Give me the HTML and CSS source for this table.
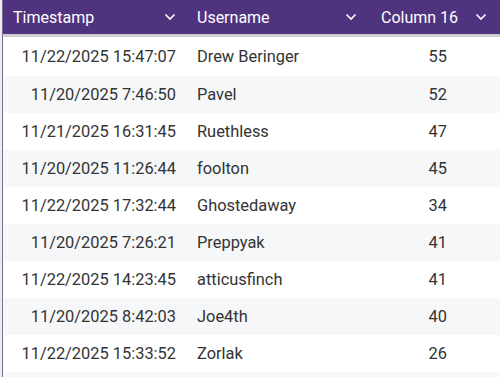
FILE: index.html
```html
<!DOCTYPE html>
<html>
<head>
<meta charset="utf-8">
<link rel="stylesheet" href="styles.css">
</head>
<body>
<div class="table">
  <div class="head">
    <div class="hcell"><span>Timestamp</span><svg class="chev" viewBox="0 0 12 8"><path d="M1.5 1.5 L6 6 L10.5 1.5" /></svg></div>
    <div class="hcell"><span>Username</span><svg class="chev" viewBox="0 0 12 8"><path d="M1.5 1.5 L6 6 L10.5 1.5" /></svg></div>
    <div class="hcell"><span>Column 16</span><svg class="chev" viewBox="0 0 12 8"><path d="M1.5 1.5 L6 6 L10.5 1.5" /></svg></div>
  </div>
  <div class="band"></div>
  <div class="body">
    <div class="row first"><div class="c ts">11/22/2025 15:47:07</div><div class="c un">Drew Beringer</div><div class="c num">55</div></div>
    <div class="row"><div class="c ts">11/20/2025 7:46:50</div><div class="c un">Pavel</div><div class="c num">52</div></div>
    <div class="row"><div class="c ts">11/21/2025 16:31:45</div><div class="c un">Ruethless</div><div class="c num">47</div></div>
    <div class="row"><div class="c ts">11/20/2025 11:26:44</div><div class="c un">foolton</div><div class="c num">45</div></div>
    <div class="row"><div class="c ts">11/22/2025 17:32:44</div><div class="c un">Ghostedaway</div><div class="c num">34</div></div>
    <div class="row"><div class="c ts">11/20/2025 7:26:21</div><div class="c un">Preppyak</div><div class="c num">41</div></div>
    <div class="row"><div class="c ts">11/22/2025 14:23:45</div><div class="c un">atticusfinch</div><div class="c num">41</div></div>
    <div class="row"><div class="c ts">11/20/2025 8:42:03</div><div class="c un">Joe4th</div><div class="c num">40</div></div>
    <div class="row"><div class="c ts">11/22/2025 15:33:52</div><div class="c un">Zorlak</div><div class="c num">26</div></div>
    <div class="row"><div class="c ts"></div><div class="c un"></div><div class="c num"></div></div>
  </div>
</div>
</body>
</html>
```
FILE: styles.css
```css
html, body {
  margin: 0;
  padding: 0;
  background: #ececf0;
  overflow: hidden;
}
body {
  font-family: Roboto, "Liberation Sans", sans-serif;
  width: 500px;
  height: 377px;
}
.table {
  height: 377px;
  overflow: hidden;
  margin-left: 2px;
  border-left: 1px solid #7a6d98;
  background: #ffffff;
}
.head {
  display: grid;
  grid-template-columns: 182px 185px 130px;
  height: 34px;
  background: #4f337f;
  color: #ffffff;
  font-size: 16px;
  margin-left: -3px;
  padding-left: 3px;
}
.hcell {
  display: flex;
  align-items: center;
  justify-content: space-between;
}
.hcell:nth-child(1) { padding: 0 9px 0 10px; }
.hcell:nth-child(2) { padding: 0 13px 0 12px; }
.hcell:nth-child(3) { padding: 0 13px 0 11px; }
.chev {
  width: 12px;
  height: 8px;
  fill: none;
  stroke: #ffffff;
  stroke-width: 1.6;
}
.band {
  height: 3px;
  background: #cfcfd3;
  margin-left: -3px;
}
.row {
  display: grid;
  grid-template-columns: 182px 185px 130px;
  height: 37px;
  align-items: center;
  font-size: 16.4px;
  color: #333333;
}
.row.first {
  height: 39px;
}
.row:nth-child(even) {
  background: #f6f7f9;
}
.c.ts {
  text-align: right;
  padding-right: 9px;
}
.c.un {
  padding-left: 12px;
}
.c.num {
  text-align: right;
  padding-right: 53px;
}
```
